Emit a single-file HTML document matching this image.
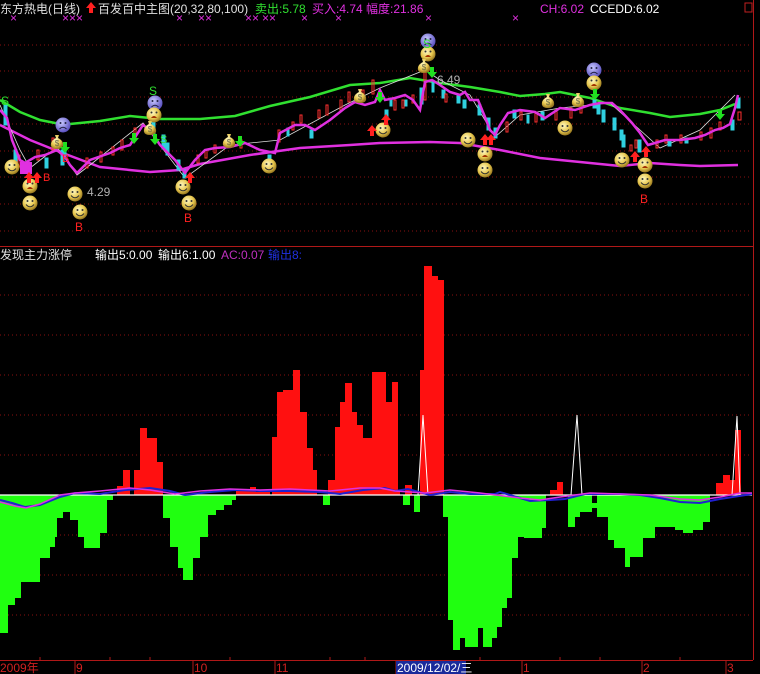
<!DOCTYPE html>
<html><head><meta charset="utf-8"><style>
html,body{margin:0;padding:0;background:#000;width:760px;height:674px;overflow:hidden}
svg{display:block}
text{font-family:"Liberation Sans","Noto Sans CJK SC",sans-serif;font-size:12px}
</style></head><body>
<svg width="760" height="674" viewBox="0 0 760 674">
<defs>
<radialGradient id="sm" cx="40%" cy="35%" r="65%"><stop offset="0" stop-color="#fff8c0"/><stop offset="0.6" stop-color="#e8c850"/><stop offset="1" stop-color="#9a7a20"/></radialGradient>
<radialGradient id="pu" cx="40%" cy="35%" r="65%"><stop offset="0" stop-color="#c8c8ff"/><stop offset="1" stop-color="#5a50c0"/></radialGradient>
<g id="smile"><circle r="7.5" fill="url(#sm)"/><circle cx="-2.5" cy="-2" r="1" fill="#333"/><circle cx="2.5" cy="-2" r="1" fill="#333"/><path d="M-4 1.5 Q0 6 4 1.5" stroke="#333" fill="none" stroke-width="1"/></g>
<g id="cry"><circle r="7.5" fill="url(#sm)"/><path d="M-3 3 Q0 -1 3 3Z" fill="#a03000"/><circle cx="-2.5" cy="-2.5" r="1" fill="#333"/><circle cx="2.5" cy="-2.5" r="1" fill="#333"/></g>
<g id="purp"><circle r="7.5" fill="url(#pu)"/><circle cx="-2.5" cy="-2" r="1" fill="#224"/><circle cx="2.5" cy="-2" r="1" fill="#224"/><path d="M-3.5 4 Q0 0.5 3.5 4" stroke="#224" fill="none" stroke-width="1"/></g>
<g id="bag"><path d="M-2 -7 L2 -7 L1 -4 Q7 -1 6 4 Q5 7 0 7 Q-5 7 -6 4 Q-7 -1 -1 -4Z" fill="url(#sm)"/><text x="0" y="4" text-anchor="middle" style="font-size:8px" fill="#664">$</text></g>
<g id="up"><path d="M0 -6 L5 0 L2 0 L2 5 L-2 5 L-2 0 L-5 0Z" fill="#ff2020"/></g>
<g id="dn"><path d="M0 6 L5 0 L2 0 L2 -5 L-2 -5 L-2 0 L-5 0Z" fill="#20e020"/></g>
</defs>

<!-- grid upper -->
<g stroke="#8a1010" stroke-dasharray="1,3" stroke-width="1">
<line x1="0" y1="45" x2="752" y2="45"/><line x1="0" y1="71" x2="752" y2="71"/><line x1="0" y1="97" x2="752" y2="97"/><line x1="0" y1="124" x2="752" y2="124"/><line x1="0" y1="151" x2="752" y2="151"/><line x1="0" y1="177" x2="752" y2="177"/><line x1="0" y1="204" x2="752" y2="204"/><line x1="0" y1="231" x2="752" y2="231"/>
<line x1="0" y1="295" x2="752" y2="295"/><line x1="0" y1="335" x2="752" y2="335"/><line x1="0" y1="375" x2="752" y2="375"/><line x1="0" y1="415" x2="752" y2="415"/><line x1="0" y1="455" x2="752" y2="455"/><line x1="0" y1="535" x2="752" y2="535"/><line x1="0" y1="575" x2="752" y2="575"/><line x1="0" y1="615" x2="752" y2="615"/>
</g>
<line x1="0" y1="246.5" x2="753" y2="246.5" stroke="#b01818"/>
<line x1="753.5" y1="0" x2="753.5" y2="660" stroke="#b01818"/>
<rect x="745" y="3" width="7" height="9" fill="none" stroke="#c02020"/>

<!-- header -->
<text x="0" y="13" fill="#e0e0e0">东方热电(日线)</text>
<use href="#up" x="91" y="8"/>
<text x="98" y="13" fill="#e0e0e0">百发百中主图(20,32,80,100)</text>
<text x="255" y="13" fill="#30e030">卖出:5.78</text>
<text x="312" y="13" fill="#e030e0">买入:4.74</text>
<text x="366" y="13" fill="#e030e0">幅度:21.86</text>
<text x="540" y="13" fill="#e030e0">CH:6.02</text>
<text x="590" y="13" fill="#ffffff">CCEDD:6.02</text>
<g fill="#e030e0" style="font-size:8px"><text x="10" y="22">×</text><text x="62" y="22">×××</text><text x="176" y="22">×</text><text x="198" y="22">××</text><text x="245" y="22">××</text><text x="262" y="22">××</text><text x="301" y="22">×</text><text x="335" y="22">×</text><text x="512" y="22">×</text><text x="425" y="22">×</text></g>

<!-- MAs -->
<polyline fill="none" stroke="#30e030" stroke-width="2.5" points="0,100 20,112 40,120 55,123 70,124 100,121 130,116 160,119 200,119 235,116 270,106 310,97 350,85 380,83 410,78 440,83 470,87 500,92 520,96 545,94 560,92 590,98 620,108 650,113 670,117 700,114 720,110 735,104"/>
<polyline fill="none" stroke="#e030e0" stroke-width="2.5" points="0,125 30,140 60,152 100,167 150,172 180,170 200,164 250,155 300,148 350,145 380,143 430,142 460,143 500,150 540,158 580,162 620,166 650,163 680,165 700,166 738,165"/>
<!-- thin white line -->
<polyline fill="none" stroke="#dddddd" stroke-width="0.8" points="0,105 20,150 30,168 57,147 77,175 90,165 143,123 185,178 230,145 280,140 345,105 380,88 425,70 440,80 470,95 495,137 520,115 560,108 610,103 640,130 660,148 700,130 735,95"/>
<!-- candles -->
<g stroke-width="1">
<g stroke="#30d0e0" fill="#30d0e0">
<rect x="4" y="105" width="3" height="20"/><rect x="14" y="150" width="3" height="12"/><rect x="45" y="158" width="3" height="10"/><rect x="61" y="150" width="3" height="15"/><rect x="64" y="148" width="2" height="10"/><rect x="152" y="122" width="3" height="12"/><rect x="162" y="135" width="3" height="14"/><rect x="166" y="143" width="3" height="12"/><rect x="177" y="160" width="3" height="10"/><rect x="183" y="170" width="3" height="8"/><rect x="268" y="155" width="3" height="8"/><rect x="287" y="128" width="2" height="8"/><rect x="310" y="130" width="3" height="8"/><rect x="390" y="98" width="2" height="8"/><rect x="385" y="110" width="3" height="10"/><rect x="404" y="100" width="3" height="6"/><rect x="420" y="88" width="3" height="16"/><rect x="432" y="82" width="2" height="10"/><rect x="442" y="90" width="3" height="8"/><rect x="457" y="95" width="3" height="8"/><rect x="463" y="100" width="3" height="8"/><rect x="478" y="105" width="3" height="10"/><rect x="487" y="118" width="3" height="12"/><rect x="494" y="128" width="3" height="10"/><rect x="513" y="110" width="3" height="8"/><rect x="527" y="115" width="2" height="8"/><rect x="541" y="112" width="3" height="8"/><rect x="593" y="100" width="3" height="8"/><rect x="597" y="104" width="3" height="10"/><rect x="602" y="110" width="3" height="12"/><rect x="613" y="118" width="3" height="12"/><rect x="620" y="130" width="3" height="10"/><rect x="622" y="135" width="3" height="12"/><rect x="638" y="140" width="3" height="12"/><rect x="668" y="140" width="3" height="6"/><rect x="685" y="138" width="3" height="5"/><rect x="731" y="120" width="3" height="10"/><rect x="737" y="98" width="3" height="10"/>
</g>
<g stroke="#ff3030" fill="none">
<rect x="18" y="155" width="2" height="12"/><rect x="37" y="150" width="2" height="10"/><rect x="52" y="138" width="2" height="12"/><rect x="86" y="158" width="2" height="10"/><rect x="100" y="152" width="2" height="10"/><rect x="112" y="147" width="2" height="8"/><rect x="121" y="140" width="2" height="10"/><rect x="134" y="128" width="2" height="12"/><rect x="197" y="155" width="2" height="8"/><rect x="205" y="150" width="2" height="8"/><rect x="214" y="145" width="2" height="8"/><rect x="240" y="140" width="2" height="8"/><rect x="278" y="130" width="2" height="12"/><rect x="292" y="122" width="2" height="8"/><rect x="300" y="115" width="2" height="8"/><rect x="318" y="110" width="2" height="8"/><rect x="326" y="105" width="2" height="10"/><rect x="340" y="100" width="2" height="10"/><rect x="348" y="92" width="2" height="10"/><rect x="362" y="90" width="2" height="8"/><rect x="372" y="80" width="2" height="14"/><rect x="394" y="100" width="2" height="10"/><rect x="402" y="100" width="2" height="8"/><rect x="412" y="95" width="2" height="8"/><rect x="424" y="72" width="2" height="28"/><rect x="445" y="94" width="2" height="8"/><rect x="506" y="122" width="2" height="10"/><rect x="520" y="112" width="2" height="8"/><rect x="535" y="112" width="2" height="10"/><rect x="555" y="110" width="2" height="10"/><rect x="570" y="108" width="2" height="10"/><rect x="580" y="105" width="2" height="8"/><rect x="630" y="145" width="2" height="6"/><rect x="635" y="140" width="2" height="8"/><rect x="656" y="140" width="2" height="8"/><rect x="665" y="135" width="2" height="8"/><rect x="680" y="135" width="2" height="8"/><rect x="700" y="132" width="2" height="8"/><rect x="710" y="128" width="2" height="10"/><rect x="719" y="122" width="2" height="8"/><rect x="738" y="112" width="3" height="8"/>
</g>
<rect x="20" y="162" width="12" height="12" fill="#e030e0"/>
</g>
<!-- price line -->
<polyline fill="none" stroke="#e030e0" stroke-width="2.5" points="0,110 7,118 12,140 20,160 25,163 35,157 45,155 57,150 65,157 70,165 77,173 90,160 110,153 120,148 130,145 143,125 150,130 160,145 175,160 185,173 195,160 205,150 215,148 230,147 245,143 260,150 275,153 280,133 295,125 305,125 315,130 330,120 345,108 355,102 365,105 375,102 380,90 385,100 395,98 405,95 413,100 420,110 425,82 432,80 440,85 450,92 460,95 465,92 470,100 478,100 485,117 490,130 495,135 500,125 508,113 520,110 535,112 545,118 560,108 575,110 590,105 600,103 612,103 620,110 632,123 640,133 648,145 655,143 665,140 680,140 695,138 705,135 715,130 723,128 730,124 735,108 738,95"/>

<!-- icons -->
<use href="#smile" x="12" y="167"/><use href="#cry" x="30" y="186"/><use href="#smile" x="30" y="203"/>
<use href="#purp" x="63" y="125"/><use href="#bag" x="57" y="142"/><use href="#smile" x="75" y="194"/><use href="#smile" x="80" y="212"/>
<use href="#purp" x="155" y="103"/><use href="#cry" x="154" y="115"/><use href="#bag" x="150" y="128"/>
<use href="#smile" x="183" y="187"/><use href="#smile" x="189" y="203"/><use href="#smile" x="269" y="166"/>
<use href="#bag" x="229" y="141"/><use href="#bag" x="360" y="96"/><use href="#smile" x="383" y="130"/>
<use href="#purp" x="428" y="41"/><use href="#cry" x="428" y="54"/><use href="#bag" x="424" y="66"/>
<use href="#smile" x="468" y="140"/><use href="#cry" x="485" y="154"/><use href="#smile" x="485" y="170"/>
<use href="#bag" x="548" y="101"/><use href="#bag" x="578" y="100"/><use href="#smile" x="565" y="128"/>
<use href="#purp" x="594" y="70"/><use href="#cry" x="594" y="83"/>
<use href="#smile" x="622" y="160"/><use href="#cry" x="645" y="165"/><use href="#smile" x="645" y="181"/>
<use href="#up" x="37" y="178"/><use href="#up" x="29" y="178"/><use href="#up" x="372" y="131"/><use href="#up" x="386" y="120"/><use href="#up" x="485" y="140"/><use href="#up" x="491" y="140"/><use href="#up" x="635" y="157"/><use href="#up" x="646" y="152"/><use href="#up" x="190" y="178"/>
<use href="#dn" x="65" y="147"/><use href="#dn" x="155" y="139"/><use href="#dn" x="240" y="141"/><use href="#dn" x="380" y="97"/><use href="#dn" x="134" y="138"/><use href="#dn" x="595" y="94"/><use href="#dn" x="720" y="114"/><use href="#dn" x="432" y="72"/>
<g style="font-size:14px"><text x="1" y="105" fill="#30e030">S</text><text x="149" y="95" fill="#30e030">S</text><text x="423" y="48" fill="#30e030">S</text><text x="160" y="143" fill="#30e030" style="font-size:11px">S</text>
<text x="75" y="231" fill="#ff2020">B</text><text x="184" y="222" fill="#ff2020">B</text><text x="640" y="203" fill="#ff2020">B</text><text x="43" y="181" fill="#ff2020" style="font-size:11px">B</text><text x="62" y="162" fill="#ff2020" style="font-size:11px">B</text></g>
<text x="87" y="196" fill="#b0b0b0">4.29</text><text x="437" y="84" fill="#b0b0b0">6.49</text>

<!-- lower header -->
<text x="0" y="259" fill="#e0e0e0">发现主力涨停</text>
<text x="95" y="259" fill="#ffffff">输出5:0.00</text><text x="158" y="259" fill="#ffffff">输出6:1.00</text>
<text x="221" y="259" fill="#c030c0">AC:0.07</text><text x="268" y="259" fill="#2030e0">输出8:</text>

<!-- red bars -->
<g fill="#ff1010">
<polygon points="117,495 117,486 123,486 123,470 130,470 130,495"/>
<polygon points="134,495 134,470 140,470 140,428 147,428 147,438 157,438 157,462 163,462 163,495"/>
<polygon points="236,495 236,490 250,490 250,487 256,487 256,492 262,492 262,490 270,490 270,495"/>
<polygon points="272,495 272,437 277,437 277,392 283,392 283,390 293,390 293,370 300,370 300,412 307,412 307,448 313,448 313,470 317,470 317,495"/>
<polygon points="328,495 328,480 335,480 335,427 340,427 340,402 345,402 345,383 352,383 352,412 357,412 357,425 363,425 363,438 372,438 372,372 380,372 380,372 386,372 386,402 392,402 392,382 398,382 398,492 400,492 400,495"/>
<polygon points="405,495 405,485 412,485 412,495"/>
<polygon points="420,495 420,370 424,370 424,266 432,266 432,276 438,276 438,280 444,280 444,495"/>
<polygon points="550,495 550,490 557,490 557,482 563,482 563,495"/>
<polygon points="716,495 716,483 723,483 723,475 730,475 730,480 735,480 735,430 741,430 741,495"/>
</g>
<!-- green bars -->
<g fill="#20ff10">
<polygon points="0,495 0,633 8,633 8,605 15,605 15,598 21,598 21,582 40,582 40,558 50,558 50,547 55,547 55,537 57,537 57,518 63,518 63,512 70,512 70,520 78,520 78,537 84,537 84,548 100,548 100,533 107,533 107,500 113,500 113,495"/>
<polygon points="163,495 163,518 170,518 170,547 178,547 178,568 183,568 183,580 193,580 193,558 200,558 200,537 208,537 208,515 216,515 216,510 224,510 224,505 232,505 232,500 236,500 236,495"/>
<polygon points="323,495 323,505 330,505 330,495"/>
<polygon points="403,495 403,505 410,505 410,495"/><polygon points="414,495 414,512 420,512 420,495"/>
<polygon points="443,495 443,517 448,517 448,620 453,620 453,650 460,650 460,638 465,638 465,647 478,647 478,628 483,628 483,647 492,647 492,638 497,638 497,627 502,627 502,608 507,608 507,598 512,598 512,558 518,558 518,537 524,537 524,538 542,538 542,528 546,528 546,495"/>
<polygon points="568,495 568,527 575,527 575,517 580,517 580,512 592,512 592,508 599,508 599,503 592,503 592,495"/>
<polygon points="597,495 597,517 608,517 608,540 614,540 614,548 625,548 625,567 630,567 630,557 643,557 643,538 655,538 655,527 675,527 675,530 683,530 683,533 693,533 693,530 703,530 703,522 710,522 710,495"/>
</g>
<line x1="0" y1="495" x2="752" y2="495" stroke="#ffffff" stroke-width="1.2"/>
<!-- white spikes -->
<g fill="none" stroke="#ffffff" stroke-width="1">
<polyline points="418,495 423,415 428,495"/><polyline points="571,495 577,415 582,495"/><polyline points="732,495 737,416 740,495"/>
</g>
<!-- zero-ish lines -->
<polyline fill="none" stroke="#2020d0" stroke-width="2" points="0,500 12,503 25,507 40,505 60,497 75,493 100,494 125,490 150,488 170,491 185,495 210,492 235,490 260,491 290,491 320,492 340,494 363,490 385,488 395,491 408,489 430,495 450,492 470,494 495,494 500,492 520,498 530,501 550,500 565,499 585,494 600,494 620,494 640,495 660,498 680,502 700,503 720,499 752,494"/>
<polyline fill="none" stroke="#e030e0" stroke-width="1.5" points="0,502 15,506 26,508 40,504 60,495 75,493 100,491 130,488 150,490 175,494 200,491 230,489 260,490 290,489 330,491 360,488 380,488 395,491 425,493 450,490 480,493 520,498 540,500 560,497 590,493 620,494 650,495 680,499 700,500 720,497 740,493 752,493"/>

<!-- axis -->
<line x1="0" y1="660.5" x2="753" y2="660.5" stroke="#b01818"/>
<g stroke="#b01818"><line x1="75" y1="660" x2="75" y2="674"/><line x1="193" y1="660" x2="193" y2="674"/><line x1="275" y1="660" x2="275" y2="674"/><line x1="396" y1="660" x2="396" y2="674"/><line x1="522" y1="660" x2="522" y2="674"/><line x1="642" y1="660" x2="642" y2="674"/><line x1="726" y1="660" x2="726" y2="674"/></g>
<g stroke="#b01818"><line x1="40" y1="657" x2="40" y2="660"/><line x1="110" y1="657" x2="110" y2="660"/><line x1="150" y1="657" x2="150" y2="660"/><line x1="230" y1="657" x2="230" y2="660"/><line x1="330" y1="657" x2="330" y2="660"/><line x1="365" y1="657" x2="365" y2="660"/><line x1="480" y1="657" x2="480" y2="660"/><line x1="560" y1="657" x2="560" y2="660"/><line x1="600" y1="657" x2="600" y2="660"/><line x1="680" y1="657" x2="680" y2="660"/></g>
<rect x="396" y="661" width="70" height="13" fill="#1a2a9a"/>
<g fill="#d02020"><text x="0" y="672">2009年</text><text x="76" y="672">9</text><text x="194" y="672">10</text><text x="276" y="672">11</text><text x="523" y="672">1</text><text x="643" y="672">2</text><text x="727" y="672">3</text></g>
<text x="397" y="672" fill="#ffffff">2009/12/02/三</text>
</svg>
</body></html>
